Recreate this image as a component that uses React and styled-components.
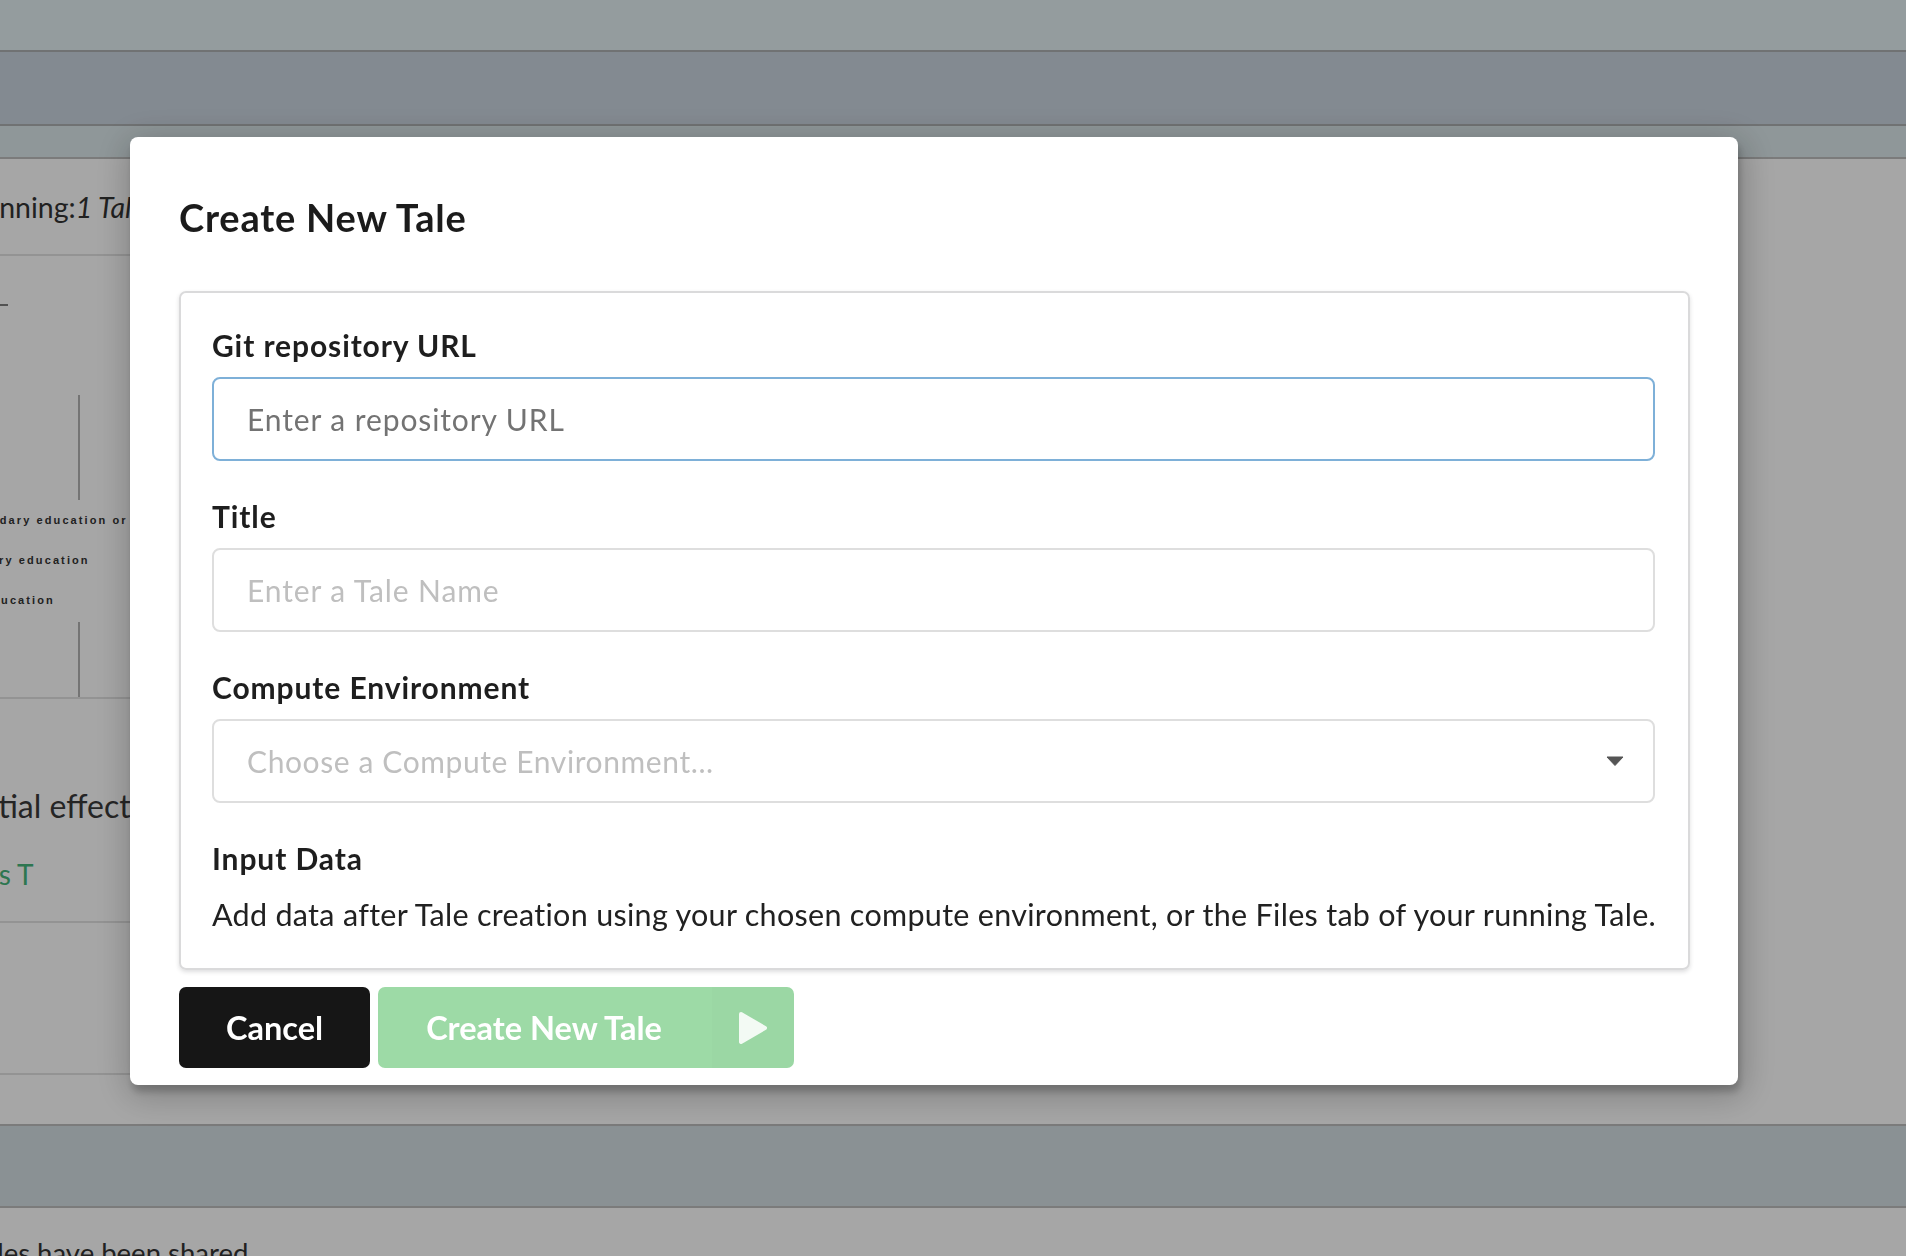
import React from 'react'
import styled, { createGlobalStyle } from 'styled-components'

const GlobalStyle = createGlobalStyle`
  html, body {
    margin: 0;
    height: 100%;
    overflow: hidden;
  }
  body {
    font-family: Lato, "Open Sans", sans-serif;
    background: #fff;
    color: #333;
  }
  * {
    box-sizing: border-box;
  }
`

// ---- page behind the dialog ----
const Page = styled.div`
  height: 1256px;
  display: flex;
  flex-direction: column;
  overflow: hidden;
`
const Band = styled.div`
  flex: none;
  height: ${p => p.$h}px;
  background: ${p => p.$bg};
  border-bottom: 2px solid ${p => p.$line || '#acafb1'};
  border-top: ${p => (p.$top ? `2px solid ${p.$line}` : 'none')};
`
const Body = styled.div`
  flex: none;
  height: 965px;
  display: flex;
`
const LeftPane = styled.div`
  width: 900px;
  display: flex;
  flex-direction: column;
`
const PaneRow = styled.div`
  flex: none;
  height: ${p => p.$h}px;
  padding-top: ${p => p.$pt || 0}px;
  border-bottom: 2px solid #e2e2e2;
  overflow: hidden;
`
const RunningText = styled.div`
  margin-left: -34px;
  font-size: 28.5px;
  line-height: 1.2;
  color: #333;
  white-space: nowrap;
  em {
    font-style: italic;
  }
`
const CardHeading = styled.div`
  margin: 5px 0 0 -84px;
  font-size: 32px;
  line-height: 1.2;
  color: #3a3a3a;
  white-space: nowrap;
`
const CardLink = styled.div`
  margin: 33px 0 0 -50px;
  font-size: 28px;
  line-height: 1.2;
  color: #46b57c;
  white-space: nowrap;
`
const SharedNote = styled.div`
  margin: 28px 0 0 -72px;
  font-size: 27.5px;
  line-height: 1.2;
  color: #333;
  white-space: nowrap;
`

const Chart = () => (
  <svg width="400" height="441" viewBox="0 0 400 441">
    <line x1="0" y1="49" x2="8" y2="49" stroke="#555" strokeWidth="1.5" />
    <line x1="79" y1="139" x2="79" y2="244" stroke="#666" strokeWidth="1" />
    <line x1="79" y1="366" x2="79" y2="441" stroke="#666" strokeWidth="1" />
    <g fontFamily="'Liberation Sans', Arial, sans-serif" fontSize="11" fontWeight="700" letterSpacing="2.1" fill="#333">
      <text x="-90" y="268">Upper secondary education or higher</text>
      <text x="-42" y="308">Primary education</text>
      <text x="-40" y="348">No education</text>
    </g>
  </svg>
)

// ---- dialog ----
const Overlay = styled.div`
  position: fixed;
  inset: 0;
  background: rgba(0, 0, 0, 0.35);
  display: flex;
  align-items: flex-start;
  padding: 137px 0 0 130px;
`
const Modal = styled.div`
  width: 1608px;
  background: #fff;
  border-radius: 8px;
  padding: 58px 48px 17px 49px;
  box-shadow: 2px 7px 7px 0 rgba(0, 0, 0, 0.2), 2px 7px 34px 5px rgba(0, 0, 0, 0.22);
`
const Title = styled.h1`
  margin: 0 0 50px;
  font-family: Lato, sans-serif;
  font-weight: 700;
  font-size: 38px;
  line-height: 1.2;
  letter-spacing: 0.8px;
  color: #1b1b1b;
`
const Segment = styled.div`
  border: 2px solid #dadadb;
  border-radius: 7px;
  padding: 35px 33px 32px 31px;
  box-shadow: 0 2px 4px 0 rgba(34, 36, 38, 0.15);
`
const Field = styled.div`
  margin-bottom: 38px;
`
const Label = styled.label`
  display: block;
  margin-bottom: 14px;
  font-weight: 700;
  font-size: 30px;
  line-height: 35px;
  letter-spacing: 0.9px;
  color: #1e1e1e;
`
const TextInput = styled.input`
  display: block;
  width: 100%;
  height: 84px;
  border: 2px solid ${p => (p.$focused ? '#7eb0d8' : '#dedede')};
  border-radius: 8px;
  padding: 0 33px;
  font-family: Lato, sans-serif;
  font-size: 30px;
  letter-spacing: 0.9px;
  color: #212121;
  background: #fff;
  outline: none;
  &::placeholder {
    color: ${p => (p.$focused ? '#737373' : '#bfbfbf')};
    opacity: 1;
  }
`
const Select = styled.div`
  display: flex;
  align-items: center;
  justify-content: space-between;
  height: 84px;
  border: 2px solid #dedede;
  border-radius: 8px;
  padding: 0 29px 0 33px;
  font-size: 30px;
  letter-spacing: 0.6px;
  color: #bfbfbf;
`
const Help = styled.p`
  margin: 17px 0 0;
  font-size: 30.5px;
  line-height: 1.4286;
  letter-spacing: 0.3px;
  color: #212121;
  white-space: nowrap;
`
const Actions = styled.div`
  display: flex;
  gap: 8px;
  margin-top: 17px;
`
const Button = styled.button`
  display: flex;
  align-items: center;
  height: 81px;
  border: 0;
  border-radius: 7px;
  padding: 0;
  font-family: Lato, sans-serif;
  font-weight: 700;
  font-size: 32.5px;
  color: #fff;
  background: ${p => p.$bg};
  cursor: pointer;
`
const ButtonText = styled.span`
  padding: 0 ${p => p.$pr}px 0 ${p => p.$pl}px;
`
const IconPart = styled.span`
  display: flex;
  align-items: center;
  justify-content: center;
  width: 82px;
  height: 100%;
  background: rgba(0, 0, 0, 0.012);
  border-radius: 0 7px 7px 0;
`

const Caret = () => (
  <svg width="18" height="10" viewBox="0 0 18 10">
    <path d="M1 1 H17 L9 9.5 Z" fill="#555" stroke="#555" strokeWidth="1" strokeLinejoin="round" />
  </svg>
)

const Play = () => (
  <svg width="30" height="34" viewBox="0 0 30 34">
    <path d="M3 3 L27 17 L3 31 Z" fill="#f3faf4" stroke="#f3faf4" strokeWidth="4" strokeLinejoin="round" />
  </svg>
)

export default function App() {
  return (
    <>
      <GlobalStyle />
      <Page>
        <Band $h={52} $bg="#e4f0f3" />
        <Band $h={74} $bg="#cad4df" />
        <Band $h={33} $bg="#dce8eb" $line="#bdbdbd" />
        <Body>
          <LeftPane>
            <PaneRow $h={97} $pt={31}>
              <RunningText>Running:<em>1 Tale</em></RunningText>
            </PaneRow>
            <PaneRow $h={443}>
              <Chart />
            </PaneRow>
            <PaneRow $h={224} $pt={83}>
              <CardHeading>Potential effect of education</CardHeading>
              <CardLink>Tales T</CardLink>
            </PaneRow>
            <PaneRow $h={152} />
          </LeftPane>
        </Body>
        <Band $h={84} $bg="#d4dfe4" $line="#bdbdbd" $top />
        <SharedNote>No Tales have been shared</SharedNote>
      </Page>

      <Overlay>
        <Modal>
          <Title>Create New Tale</Title>
          <Segment>
            <Field>
              <Label>Git repository URL</Label>
              <TextInput $focused placeholder="Enter a repository URL" />
            </Field>
            <Field>
              <Label>Title</Label>
              <TextInput placeholder="Enter a Tale Name" />
            </Field>
            <Field>
              <Label>Compute Environment</Label>
              <Select>
                <span>Choose a Compute Environment...</span>
                <Caret />
              </Select>
            </Field>
            <Label>Input Data</Label>
            <Help>
              Add data after Tale creation using your chosen compute environment, or the Files tab of your running Tale.
            </Help>
          </Segment>
          <Actions>
            <Button $bg="#161616">
              <ButtonText $pl={47} $pr={47}>Cancel</ButtonText>
            </Button>
            <Button $bg="#9ddaa6">
              <ButtonText $pl={48} $pr={50}>Create New Tale</ButtonText>
              <IconPart><Play /></IconPart>
            </Button>
          </Actions>
        </Modal>
      </Overlay>
    </>
  )
}
